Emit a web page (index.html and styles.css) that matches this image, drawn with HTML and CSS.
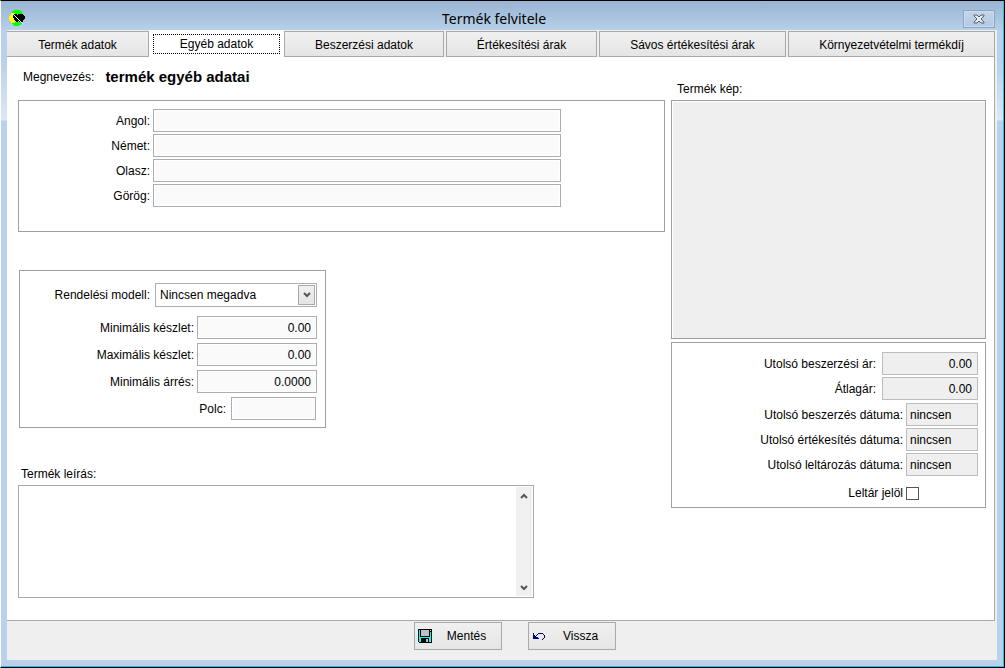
FILE: index.html
```html
<!DOCTYPE html>
<html lang="hu">
<head>
<meta charset="utf-8">
<title>Termék felvitele</title>
<link rel="stylesheet" href="styles.css">
</head>
<body>
<div class="window">
  <header class="titlebar">
    <svg class="app-icon" width="16" height="16" viewBox="0 0 16 16" shape-rendering="crispEdges" aria-hidden="true">
      <path fill="#00ff00" d="M5 0h6v1h2v2h1v1H2V3h1V1h2zM3 12h10v2h-1v1h-2v1H5v-1H4v-1H3z"/>
      <path fill="#ffff00" d="M2 3h4v2H5v6h1v2H2v-2H1v-1H0V6h1V5h1z"/>
      <path fill="#000" d="M4 4h4v1h1V4h5v1h1v1h1v3h-1v1h-1v2h-4v-1H9v1H7v-1H6v-1H5V8H4z"/>
      <path stroke="#fff" stroke-width="1" shape-rendering="auto" d="M3 3l11 11"/>
    </svg>
    <h1 class="title">Termék felvitele</h1>
    <button class="close" type="button" aria-label="Bezárás">
      <svg width="12" height="10" viewBox="0 0 12 10" aria-hidden="true">
        <path d="M1 1h3l2 2 2-2h3v1L8 5l3 3v1H8L6 7 4 9H1V8l3-3-3-3z" fill="#e4eaf1" stroke="#56616e" stroke-width="1"/>
      </svg>
    </button>
  </header>

  <div class="client">
    <nav class="tabs" role="tablist">
      <button class="tab" type="button" role="tab">Termék adatok</button>
      <button class="tab tab-active" type="button" role="tab" aria-selected="true"><span class="tab-focus">Egyéb adatok</span></button>
      <button class="tab" type="button" role="tab">Beszerzési adatok</button>
      <button class="tab" type="button" role="tab">Értékesítési árak</button>
      <button class="tab" type="button" role="tab">Sávos értékesítési árak</button>
      <button class="tab" type="button" role="tab">Környezetvételmi termékdíj</button>
    </nav>

    <main class="page">
      <section class="main-column">
        <p class="name-line"><span>Megnevezés:</span><strong class="name">termék egyéb adatai</strong></p>

        <div class="panel languages">
          <label for="en">Angol:</label><input class="field" id="en" type="text">
          <label for="de">Német:</label><input class="field" id="de" type="text">
          <label for="it">Olasz:</label><input class="field" id="it" type="text">
          <label for="el">Görög:</label><input class="field" id="el" type="text">
        </div>

        <div class="panel stock">
          <div class="row row-model">
            <label for="model">Rendelési modell:</label>
            <span class="combo">
              <select id="model"><option>Nincsen megadva</option></select>
              <span class="combo-button">
                <svg width="8" height="6" viewBox="0 0 8 6" aria-hidden="true"><path d="M1 1l3 3 3-3" fill="none" stroke="#555" stroke-width="2"/></svg>
              </span>
            </span>
          </div>
          <div class="row"><label for="min">Minimális készlet:</label><input class="field number" id="min" type="text" value="0.00"></div>
          <div class="row"><label for="max">Maximális készlet:</label><input class="field number" id="max" type="text" value="0.00"></div>
          <div class="row"><label for="margin">Minimális árrés:</label><input class="field number" id="margin" type="text" value="0.0000"></div>
          <div class="row row-shelf"><label for="shelf">Polc:</label><input class="field shelf" id="shelf" type="text"></div>
        </div>

        <label class="memo-label" for="memo">Termék leírás:</label>
        <div class="memo">
          <textarea id="memo"></textarea>
          <div class="scrollbar">
            <button type="button" aria-label="Fel"><svg width="8" height="6" viewBox="0 0 8 6" aria-hidden="true"><path d="M1 5l3-3 3 3" fill="none" stroke="#555" stroke-width="2"/></svg></button>
            <button type="button" aria-label="Le"><svg width="8" height="6" viewBox="0 0 8 6" aria-hidden="true"><path d="M1 1l3 3 3-3" fill="none" stroke="#555" stroke-width="2"/></svg></button>
          </div>
        </div>
      </section>

      <aside class="side-column">
        <p class="picture-label">Termék kép:</p>
        <div class="picture"></div>
        <div class="panel info">
          <div class="row row-price"><label for="lastprice">Utolsó beszerzési ár:</label><input class="field readonly price" id="lastprice" type="text" value="0.00" readonly></div>
          <div class="row row-price"><label for="avg">Átlagár:</label><input class="field readonly price" id="avg" type="text" value="0.00" readonly></div>
          <div class="row row-date row-first-date"><label for="bought">Utolsó beszerzés dátuma:</label><input class="field readonly date" id="bought" type="text" value="nincsen" readonly></div>
          <div class="row row-date"><label for="sold">Utolsó értékesítés dátuma:</label><input class="field readonly date" id="sold" type="text" value="nincsen" readonly></div>
          <div class="row row-date"><label for="counted">Utolsó leltározás dátuma:</label><input class="field readonly date" id="counted" type="text" value="nincsen" readonly></div>
          <div class="row row-check"><label for="mark">Leltár jelöl</label><span class="check-cell"><input class="check" id="mark" type="checkbox"></span></div>
        </div>
      </aside>
    </main>

    <footer class="actions">
      <button class="action" type="button">
        <svg width="14" height="14" viewBox="0 0 14 14" shape-rendering="crispEdges" aria-hidden="true">
          <path fill="#000" d="M0 0h14v14H1v-1H0z"/>
          <path fill="#00ffff" d="M1 1h1v7h10V3h1v10h-2V9H3v4H1z"/>
          <path fill="#00ffff" d="M1 8h12v1H1zM1 9h2v4H1zM11 9h2v4h-2z"/>
          <path fill="#c0c0c0" d="M3 1h8v6H3zM12 1h1v1h-1zM8 10h2v3H8z"/>
        </svg>
        <span>Mentés</span>
      </button>
      <button class="action" type="button">
        <svg width="14" height="14" viewBox="0 0 14 14" shape-rendering="crispEdges" aria-hidden="true">
          <path fill="#000080" d="M1 4h1v2h1v1h1v1h2v1h1v1H1zM4 6h1v1H4zM5 5h1v1H5zM6 4h5v1H6zM11 5h1v1h-1zM12 6h1v3h-1zM11 9h1v1h-1zM10 10h1v1h-1z"/>
        </svg>
        <span>Vissza</span>
      </button>
    </footer>
  </div>
</div>
</body>
</html>
```

FILE: styles.css
```css
* { box-sizing: border-box; }

body {
  margin: 0;
  font: 12px/16px "Liberation Sans", Arial, sans-serif;
  color: #000;
}

p, h1 { margin: 0; }

button, input, select, textarea {
  font: inherit;
  color: inherit;
  margin: 0;
  border-radius: 0;
}

.window {
  display: flex;
  flex-direction: column;
  min-height: 100vh;
  padding: 0 7px 7px 6px;
  border: 1px solid #000;
  border-left-color: #fff;
  box-shadow: inset -1px -1px #1fc4dc;
  background: linear-gradient(#98b4d2 0, #b9d1ea 30px, #b9d1ea 60px, #dce8f5 119px, #b9d1ea 120px);
}

.titlebar {
  display: grid;
  grid-template-columns: 18px 1fr 32px;
  align-items: center;
  height: 29px;
  padding-right: 2px;
}

.app-icon { margin: 5px 0 0 2px; }

.title {
  padding-top: 6px;
  text-align: center;
  font: 14px/20px "Noto Sans", sans-serif;
}

.close {
  display: flex;
  align-items: center;
  justify-content: center;
  height: 18px;
  margin-top: 6px;
  padding: 0;
  border: 1px solid #8da5c2;
  background: linear-gradient(#c3d5e9, #b3c9e2);
  box-shadow: inset 0 0 0 1px #cbdcee;
}

.client {
  flex: 1;
  display: flex;
  flex-direction: column;
  background: #efefef;
}

.tabs {
  display: grid;
  grid-template-columns: 142fr 135fr 162fr 153fr 189fr 207fr;
  margin-right: 2px;
  height: 27px;
}

.tab {
  margin: 1px 2px 0 0;
  padding: 1px 0 0;
  border: 1px solid #a9a9a9;
  background: linear-gradient(#f0f0f0, #e5e5e5);
  box-shadow: 2px 0 #efefef, 2px 1px #a9a9a9;
}

.tab:first-child { margin-right: 0; border-left: 0; }
.tab:last-child { margin-right: 0; box-shadow: none; }

.tab-active {
  margin: 0;
  padding: 2px 4px;
  border: 0;
  background: #fff;
  box-shadow: none;
}

.tab-focus {
  display: block;
  height: 20px;
  border: 1px dotted #000;
  line-height: 18px;
}

.page {
  flex: 1;
  display: grid;
  grid-template-columns: minmax(0, 647fr) minmax(0, 315fr);
  column-gap: 6px;
  margin-right: 2px;
  padding: 9px 8px 22px 11px;
  border: solid #a9a9a9;
  border-width: 0 1px 1px 0;
  background: #fff;
}

.main-column, .side-column {
  display: flex;
  flex-direction: column;
}

.name-line {
  display: flex;
  align-items: center;
  gap: 11px;
  height: 22px;
  margin-bottom: 12px;
  padding-left: 5px;
}

.name { font-size: 15px; }

.panel { border: 1px solid #a0a0a0; }

.field {
  width: 100%;
  height: 23px;
  padding: 0 5px;
  border: 1px solid #abadb3;
  background: #fafafa;
  box-shadow: inset 0 0 0 1px #fff;
  outline: 0;
}

.languages {
  display: grid;
  grid-template-columns: 131px 1fr;
  align-items: center;
  gap: 2px 3px;
  padding: 8px 103px 24px 0;
}

.languages label { text-align: right; }

.stock {
  display: flex;
  flex-direction: column;
  gap: 4px;
  width: 307px;
  margin: 38px 0 0 1px;
  padding: 12px 8px 7px;
}

.row {
  display: flex;
  align-items: center;
  justify-content: flex-end;
  gap: 3px;
}

.row-model { gap: 5px; margin-bottom: 5px; }

.combo {
  position: relative;
  width: 162px;
}

.combo select {
  display: block;
  appearance: none;
  width: 100%;
  height: 24px;
  padding: 0 4px;
  border: 1px solid #abadb3;
  background: #fff;
}

.combo-button {
  position: absolute;
  top: 2px;
  right: 2px;
  display: flex;
  align-items: center;
  justify-content: center;
  width: 17px;
  height: 20px;
  border: 1px solid #a9a9a9;
  background: linear-gradient(#f0f0f0, #e5e5e5);
  pointer-events: none;
}

.number { width: 120px; text-align: right; }

.row-shelf { gap: 5px; padding-right: 1px; }
.shelf { width: 85px; }

.memo-label { margin: 38px 0 3px 3px; }

.memo {
  display: flex;
  width: 516px;
  height: 113px;
  padding: 1px;
  border: 1px solid #a9a9a9;
}

.memo textarea {
  flex: 1;
  resize: none;
  border: 0;
  padding: 2px 4px;
  outline: 0;
}

.scrollbar {
  display: flex;
  flex-direction: column;
  justify-content: space-between;
  width: 16px;
  background: #f0f0f0;
}

.scrollbar button {
  display: flex;
  align-items: center;
  justify-content: center;
  height: 17px;
  padding: 0;
  border: 0;
  background: none;
}

.picture-label { margin: 15px 0 3px 6px; }

.picture {
  height: 239px;
  border: 1px solid #a0a0a0;
  background: #efefef;
  box-shadow: inset 1px 1px #fff;
}

.info {
  display: flex;
  flex-direction: column;
  gap: 2px;
  margin-top: 3px;
  padding: 9px 7px 6px;
}

.readonly {
  border-color: #bcbcbc;
  background: #efefef;
  box-shadow: none;
}

.row-price { gap: 6px; }
.price { width: 96px; text-align: right; }
.row-first-date { margin-top: 1px; }
.date { width: 72px; padding: 0 3px; }
.row-check { margin-top: 7px; }
.check-cell { display: flex; width: 72px; }

.check {
  appearance: none;
  width: 13px;
  height: 13px;
  border: 1px solid #555;
  background: #fff;
}

.check:checked { background: #555; }

.actions {
  display: flex;
  justify-content: center;
  gap: 26px;
  height: 39px;
  padding: 1px 0 0 26px;
}

.action {
  display: grid;
  grid-template-columns: 14px 1fr;
  align-items: center;
  width: 88px;
  height: 28px;
  padding: 0 0 0 3px;
  border: 1px solid #a9a9a9;
  background: linear-gradient(#f0f0f0, #e5e5e5);
}
```
